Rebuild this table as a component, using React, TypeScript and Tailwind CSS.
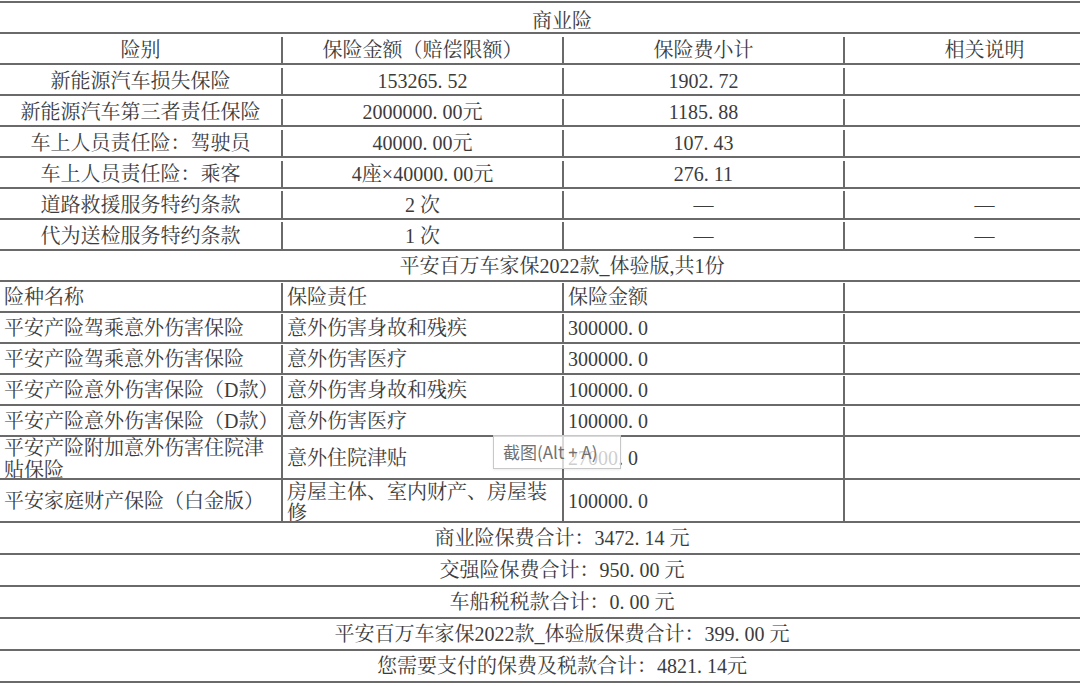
import type { ReactNode } from 'react';

const line = 'border-[#6a6a6a]';

// numbers like 1902.72 show a wide gap after the dot in the source
const Num = ({ v }: { v: string }) => {
  const parts = v.split('.');
  if (parts.length < 2) return <>{v}</>;
  return (
    <>
      {parts[0]}
      <span className="mr-[5px]">.</span>
      {parts[1]}
    </>
  );
};

const commercial: [string, ReactNode, ReactNode, ReactNode][] = [
  ['新能源汽车损失保险', <Num v="153265.52" />, <Num v="1902.72" />, ''],
  ['新能源汽车第三者责任保险', <><Num v="2000000.00" />元</>, <Num v="1185.88" />, ''],
  ['车上人员责任险：驾驶员', <><Num v="40000.00" />元</>, <Num v="107.43" />, ''],
  ['车上人员责任险：乘客', <>4座×<Num v="40000.00" />元</>, <Num v="276.11" />, ''],
  ['道路救援服务特约条款', '2 次', '—', '—'],
  ['代为送检服务特约条款', '1 次', '—', '—'],
];

const plan = [
  ['平安产险驾乘意外伤害保险', '意外伤害身故和残疾', '300000.0'],
  ['平安产险驾乘意外伤害保险', '意外伤害医疗', '300000.0'],
  ['平安产险意外伤害保险（D款）', '意外伤害身故和残疾', '100000.0'],
  ['平安产险意外伤害保险（D款）', '意外伤害医疗', '100000.0'],
];

const totals: ReactNode[] = [
  <>商业险保费合计：<Num v="3472.14" /> 元</>,
  <>交强险保费合计：<Num v="950.00" /> 元</>,
  <>车船税税款合计：<Num v="0.00" /> 元</>,
  <>平安百万车家保2022款_体验版保费合计：<Num v="399.00" /> 元</>,
  <>您需要支付的保费及税款合计：<Num v="4821.14" />元</>,
];

const Row = ({ children, h = 'h-[31px]', pad = '' }: { children: ReactNode; h?: string; pad?: string }) => (
  <div className={`grid grid-cols-[281px_281px_281px_281px] border-b-2 ${line} ${h} ${pad}`}>{children}</div>
);

const Cell = ({ children, first, left }: { children?: ReactNode; first?: boolean; left?: boolean }) => (
  <div
    className={`flex items-center overflow-hidden ${first ? '' : `border-l-2 ${line}`} ${
      left ? 'justify-start pl-[4px] text-left' : 'justify-center text-center'
    }`}
  >
    {children}
  </div>
);

const Wide = ({ children, h = 'h-[31px]', pad = '' }: { children: ReactNode; h?: string; pad?: string }) => (
  <div className={`flex items-center justify-center border-b-2 ${line} ${h} ${pad} whitespace-nowrap`}>{children}</div>
);

export default function App() {
  return (
    <div className="w-[1080px] h-[686px] overflow-hidden bg-white pt-[1px] font-['Liberation_Serif','Noto_Serif_CJK_SC','Noto_Sans_CJK_SC',serif] text-[20px] leading-[22px] text-[#3c3c3c]">
      <div className={`relative w-[1124px] border-t-2 ${line}`}>
        <Wide pad="pt-[6px]">商业险</Wide>
        <Row pad="pt-[3px]">
          <Cell first>险别</Cell>
          <Cell>保险金额（赔偿限额）</Cell>
          <Cell>保险费小计</Cell>
          <Cell>相关说明</Cell>
        </Row>
        {commercial.map((r, i) => (
          <Row key={i} pad={i < 4 ? 'pt-[3px]' : 'pt-[2px]'}>
            <Cell first>{r[0]}</Cell>
            <Cell>{r[1]}</Cell>
            <Cell>{r[2]}</Cell>
            <Cell>{r[3]}</Cell>
          </Row>
        ))}

        <Wide pad="pt-[1px]">平安百万车家保2022款_体验版,共1份</Wide>
        <Row pad="pt-[1px]">
          <Cell first left>险种名称</Cell>
          <Cell left>保险责任</Cell>
          <Cell left>保险金额</Cell>
          <Cell />
        </Row>
        {plan.map((r, i) => (
          <Row key={i} pad="pt-[1px]">
            <Cell first left><span className="whitespace-nowrap">{r[0]}</span></Cell>
            <Cell left>{r[1]}</Cell>
            <Cell left><Num v={r[2]} /></Cell>
            <Cell />
          </Row>
        ))}
        <Row h="h-[43px]">
          <Cell first left><span className="leading-[22px] pt-[2px]">平安产险附加意外伤害住院津贴保险</span></Cell>
          <Cell left>意外住院津贴</Cell>
          <Cell left><Num v="27000.0" /></Cell>
          <Cell />
        </Row>
        <Row h="h-[43px]">
          <Cell first left>平安家庭财产保险（白金版）</Cell>
          <Cell left><span className="leading-[21px] pt-[4px]">房屋主体、室内财产、房屋装修</span></Cell>
          <Cell left><Num v="100000.0" /></Cell>
          <Cell />
        </Row>

        {totals.map((t, i) => (
          <Wide key={i} h="h-[32px]">{t}</Wide>
        ))}

        {/* screenshot tool hint sitting over the table */}
        <div className="absolute left-[493px] top-[432px] w-[128px] h-[34px] border border-[#c8c8c8] bg-white/75 flex items-center pl-[9px] font-['Noto_Sans_CJK_SC',sans-serif] text-[17px] text-[#707070] whitespace-nowrap shadow-[0_1px_2px_rgba(0,0,0,0.08)]">
          截图(Alt + A)
        </div>
      </div>
    </div>
  );
}
